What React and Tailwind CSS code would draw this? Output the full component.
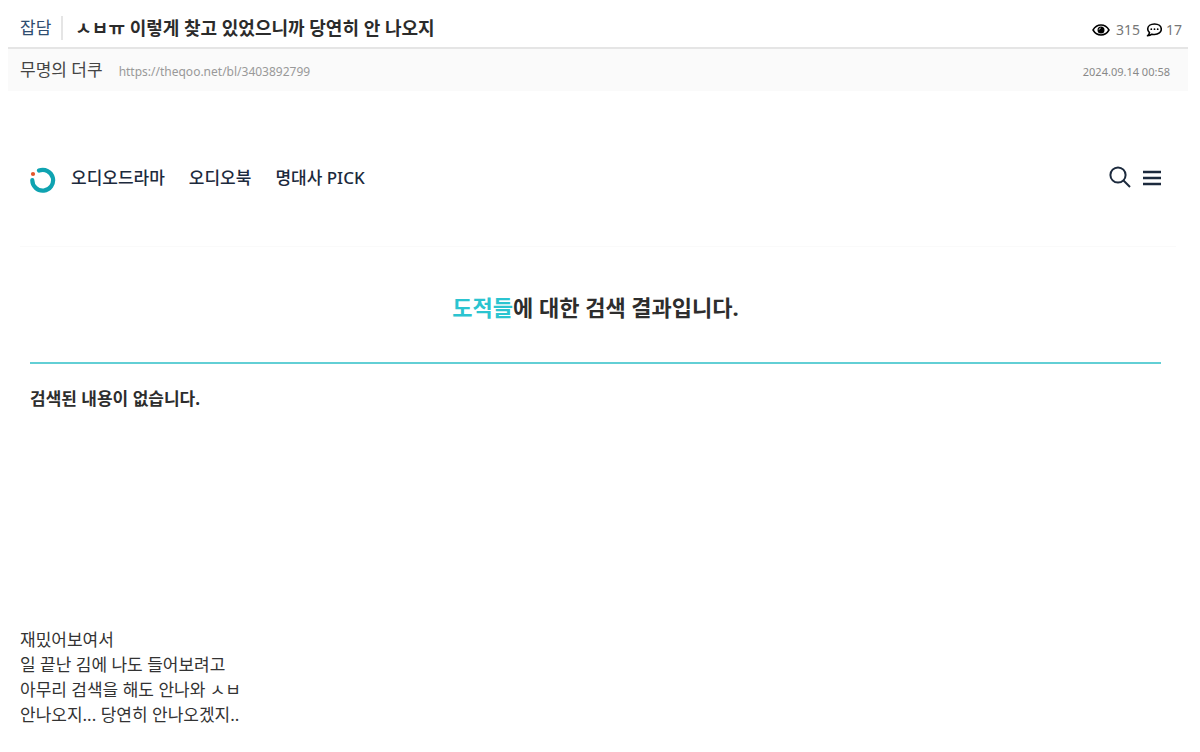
import React from "react";

const navItems = ["오디오드라마", "오디오북", "명대사 PICK"];

const bodyLines = [
  "재밌어보여서",
  "일 끝난 김에 나도 들어보려고",
  "아무리 검색을 해도 안나와 ㅅㅂ",
  "안나오지... 당연히 안나오겠지..",
];

const EyeIcon = () => (
  <svg viewBox="0 0 18 12" className="w-[18px] h-3" aria-hidden="true">
    <path
      d="M1 6C3 2.6 5.8 1 9 1s6 1.600 8 5c-2 3.400-4.800 5-8 5S3 9.400 1 6z"
      fill="none"
      stroke="#000"
      strokeWidth="1.5"
      strokeLinejoin="round"
    />
    <circle cx="9" cy="6" r="3.500" fill="#000" />
    <path d="M7 6a2 2 0 0 1 2-2" fill="none" stroke="#fff" strokeWidth="0.6" />
  </svg>
);

const CommentIcon = () => (
  <svg viewBox="0 0 16 14" className="w-4 h-3.5" aria-hidden="true">
    <path
      d="M8.500 1C4.600 1 1.700 3.100 1.700 6c0 1.500.7 2.700 1.800 3.600C3.300 11 2.600 12 1.500 12.800c1.800 0 3.300-.6 4.400-1.600.8.2 1.700.3 2.600.3 3.900 0 6.800-2.300 6.800-5.300S12.400 1 8.500 1z"
      fill="none"
      stroke="#000"
      strokeWidth="1.600"
      strokeLinejoin="round"
    />
    <circle cx="5.300" cy="6.200" r="0.900" />
    <circle cx="8.500" cy="6.200" r="0.900" />
    <circle cx="11.700" cy="6.200" r="0.900" />
  </svg>
);

const Logo = () => (
  <svg viewBox="0 0 26 26" className="w-[26px] h-[26px]" aria-hidden="true">
    <path
      d="M9 3.500A10.400 10.400 0 1 1 2.300 13"
      fill="none"
      stroke="#0fa3b1"
      strokeWidth="4.200"
      strokeLinecap="round"
    />
    <circle cx="3" cy="7" r="2.100" fill="#e2562b" />
  </svg>
);

const PostHeader = () => (
  <header>
    <div className="flex items-center justify-between h-[49px] pt-2 pl-3 pr-1.5 border-b-2 border-[#e5e5e5]">
      <div className="flex items-center">
        <a href="#category" className="text-[17px] leading-6 pr-2.5 border-r-2 border-[#e5e5e5] text-[#2f4d70]">
          잡담
        </a>
        <h1 className="pl-3 text-[18px] leading-6 font-bold text-[#2b2b2b]">
          ㅅㅂㅠ 이렇게 찾고 있었으니까 당연히 안 나오지
        </h1>
      </div>
      <div className="flex items-center pt-1 text-sm text-[#777]">
        <EyeIcon />
        <span className="px-1.5">315</span>
        <CommentIcon />
        <span className="pl-1">17</span>
      </div>
    </div>
    <div className="flex items-center justify-between h-[42px] pl-3 pr-[18px] bg-[#fafafa]">
      <div className="flex items-center gap-4">
        <span className="text-[17px] text-[#444]">무명의 더쿠</span>
        <a href="https://theqoo.net/bl/3403892799" className="pt-1 text-xs text-[#999]">
          https://theqoo.net/bl/3403892799
        </a>
      </div>
      <time dateTime="2024-09-14T00:58" className="pt-1 text-[11px] text-[#888]">
        2024.09.14 00:58
      </time>
    </div>
  </header>
);

const SearchResult = () => (
  <section className="mx-3 mt-[46px] text-[#2d2d2d]">
    <div className="flex items-center justify-between h-[110px] pl-2.5 pr-[15px] pb-7 border-b border-[#fafafa]">
      <nav className="flex items-center text-[17px] font-medium text-[#1c2a3d]">
        <a href="#home" aria-label="홈" className="pt-1 pr-[15px]">
          <Logo />
        </a>
        <div className="flex gap-6">
          {navItems.map((item) => (
            <a key={item} href="#nav">
              {item}
            </a>
          ))}
        </div>
      </nav>
      <div className="flex items-center gap-3">
        <button type="button" aria-label="검색" className="pb-0.5">
          <svg viewBox="0 0 22 22" className="w-[22px] h-[22px]" fill="none" stroke="#1c2a3d" strokeWidth="2">
            <circle cx="9" cy="9" r="7.600" />
            <path d="M14.500 14.500L21 21" />
          </svg>
        </button>
        <button type="button" aria-label="메뉴">
          <svg viewBox="0 0 18 16" className="w-[18px] h-4" fill="none" stroke="#1c2a3d" strokeWidth="2.400">
            <path d="M0 2h18M0 8h18M0 14h18" />
          </svg>
        </button>
      </div>
    </div>
    <div className="ml-2.5 mr-[15px]">
      <h2 className="pt-[45px] pb-10 text-center text-[22px] leading-[30px] font-bold border-b-2 border-[#62cfd5]">
        <span className="text-[#2bc4d0]">도적들</span>에 대한 검색 결과입니다.
      </h2>
      <p className="pt-[21px] text-[17px] leading-7 font-bold">검색된 내용이 없습니다.</p>
    </div>
  </section>
);

const App = () => {
  return (
    <main className="pl-2 pr-3 bg-white font-['Noto_Sans','Noto_Sans_CJK_KR',sans-serif]">
      <PostHeader />
      <SearchResult />
      <div className="mt-[214px] pl-3 pb-6 text-[17px] leading-[25px] text-[#333]">
        {bodyLines.map((line) => (
          <p key={line}>{line}</p>
        ))}
      </div>
    </main>
  );
};

export default App;
